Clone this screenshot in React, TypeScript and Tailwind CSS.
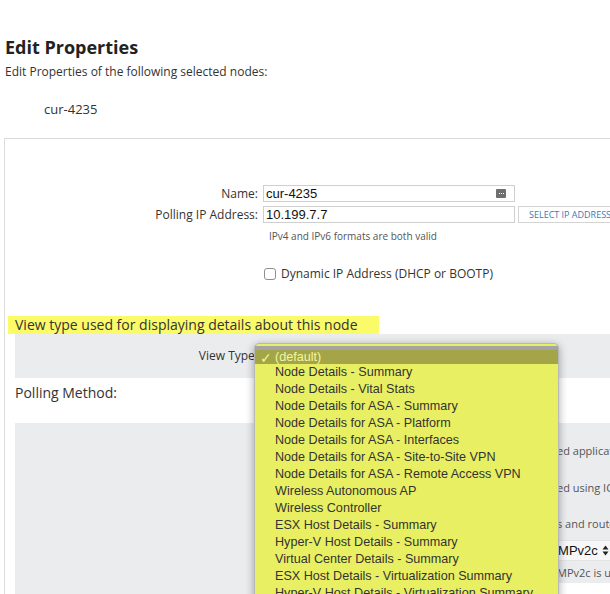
import type { ReactNode } from 'react'

const VIEW_TYPES = [
  '(default)',
  'Node Details - Summary',
  'Node Details - Vital Stats',
  'Node Details for ASA - Summary',
  'Node Details for ASA - Platform',
  'Node Details for ASA - Interfaces',
  'Node Details for ASA - Site-to-Site VPN',
  'Node Details for ASA - Remote Access VPN',
  'Wireless Autonomous AP',
  'Wireless Controller',
  'ESX Host Details - Summary',
  'Hyper-V Host Details - Summary',
  'Virtual Center Details - Summary',
  'ESX Host Details - Virtualization Summary',
  'Hyper-V Host Details - Virtualization Summary',
]

const SANS = "font-['Open_Sans',sans-serif]"
const HELV = "font-['Liberation_Sans',Arial,sans-serif]"

function FormRow({ label, children }: { label: string; children: ReactNode }) {
  return (
    <div className="flex items-center gap-[5px]">
      <div className="w-[253px] shrink-0 text-right text-[12px] leading-[17px] text-[#333]">{label}</div>
      {children}
    </div>
  )
}

// text whose head sits under the open dropdown; only the tail shows at the right edge
function HiddenTail({ head, tail }: { head: string; tail: string }) {
  return (
    <div className="flex whitespace-nowrap text-[11px] leading-[15px] text-[#555]">
      <span className="w-[542px] shrink-0 text-right">{head}</span>
      <span>{tail}</span>
    </div>
  )
}

export default function App() {
  return (
    <div className={`relative h-[594px] w-[610px] overflow-hidden bg-white px-[4px] ${SANS}`}>
      <h1 className="ml-[1px] pt-[36px] text-[18px] font-bold leading-[22px] text-[#222]">Edit Properties</h1>
      <p className="ml-[1px] mt-[6px] text-[12px] leading-[16px] text-[#333]">
        Edit Properties of the following selected nodes:
      </p>
      <p className="ml-[40px] mt-[20px] text-[13px] leading-[18px] text-[#333]">cur-4235</p>

      <div className="mt-[20px] w-[700px] border border-[#dcdcdc]">
        <div className="flex flex-col gap-[4px] pt-[46px]">
          <FormRow label="Name:">
            <div className="relative flex h-[17px] w-[252px] items-center border border-[#cfcfcf] pl-[2px]">
              <span className={`${HELV} text-[13px] text-[#111]`}>cur-4235</span>
              <span className="absolute right-[8px] top-[3px] flex h-[9px] w-[10px] items-center justify-center gap-[1px] rounded-[1px] bg-[#6f6f6f]">
                <span className="h-[1px] w-[1px] bg-white" />
                <span className="h-[1px] w-[1px] bg-white" />
                <span className="h-[1px] w-[1px] bg-white" />
              </span>
            </div>
          </FormRow>
          <FormRow label="Polling IP Address:">
            <div className="flex h-[17px] w-[252px] items-center border border-[#cfcfcf] pl-[2px]">
              <span className={`${HELV} text-[13px] text-[#111]`}>10.199.7.7</span>
            </div>
            <div className="ml-[-2px] flex h-[17px] w-[120px] items-center whitespace-nowrap border border-[#d4d4d4] pl-[10px] text-[9px] text-[#3b78b5]">
              SELECT IP ADDRESS
            </div>
          </FormRow>
        </div>
        <p className="ml-[264px] mt-[7px] text-[10px] leading-[12px] text-[#555]">IPv4 and IPv6 formats are both valid</p>

        <div className="ml-[259px] mt-[24px] flex items-center gap-[5px]">
          <span className="h-[12px] w-[12px] rounded-[3px] border border-[#8e8e8e] bg-white" />
          <span className="text-[12px] leading-[16px] text-[#333]">Dynamic IP Address (DHCP or BOOTP)</span>
        </div>

        <div className="ml-[3px] mt-[34px] w-[371px] bg-[#fbfb6a] pl-[7px] text-[14px] leading-[18px] text-[#333]">
          View type used for displaying details about this node
        </div>

        <div className="ml-[10px] flex h-[44px] items-center bg-[#ebecee]">
          <div className="w-[243px] text-right text-[12px] text-[#333]">View Type:</div>
        </div>

        <div className="ml-[10px] h-[45px] pt-[5px] text-[14px] leading-[20px] text-[#333]">Polling Method:</div>

        <div className="ml-[10px] bg-[#ebecee] pt-[20px]">
          <HiddenTail head="Node used to host monitor" tail="ed applications" />
          <div className="mt-[22px]">
            <HiddenTail head="Status is calculat" tail="ed using ICMP" />
          </div>
          <div className="mt-[21px]">
            <HiddenTail head="Most 3rd party device" tail="s and routers" />
          </div>
          <div className="ml-[520px] mt-[9px] flex h-[21px] items-center gap-[4px] border-y border-[#e3e3e3] bg-[#f7f7f7] pl-[5px]">
            <span className={`${HELV} text-[13px] text-[#111]`}>SNMPv2c</span>
            <svg width="7" height="11" viewBox="0 0 7 11">
              <path d="M3.5 0.5 L6.5 4.5 L0.5 4.5 Z M3.5 10.5 L6.5 6.5 L0.5 6.5 Z" fill="#222" />
            </svg>
          </div>
          <div className="mt-[4px]">
            <HiddenTail head="SN" tail="MPv2c is used" />
          </div>
          <div className="ml-[300px] mt-[3px] h-[20px] bg-white" />
        </div>
      </div>

      <div className={`absolute left-[254px] top-[343px] w-[305px] rounded-t-[5px] border border-[#b8b8b8] bg-[#e9ef62] pt-[2px] shadow-[0_2px_8px_rgba(0,0,0,0.35)] ${HELV}`}>
        <div className="h-[4px] bg-[#a4a4a4]" />
        {VIEW_TYPES.map((t, i) => (
          <div
            key={t}
            className={
              i === 0
                ? 'relative flex h-[14px] items-center bg-[#a3a548] pl-[20px] text-[12.6px] text-[#f3f69c]'
                : 'flex h-[17px] items-center pl-[20px] text-[12.6px] text-[#333]'
            }
          >
            {i === 0 && <span className="absolute left-[5px] top-[1px] text-[14px] leading-none text-[#f6f98a]">✓</span>}
            {t}
          </div>
        ))}
      </div>
    </div>
  )
}
